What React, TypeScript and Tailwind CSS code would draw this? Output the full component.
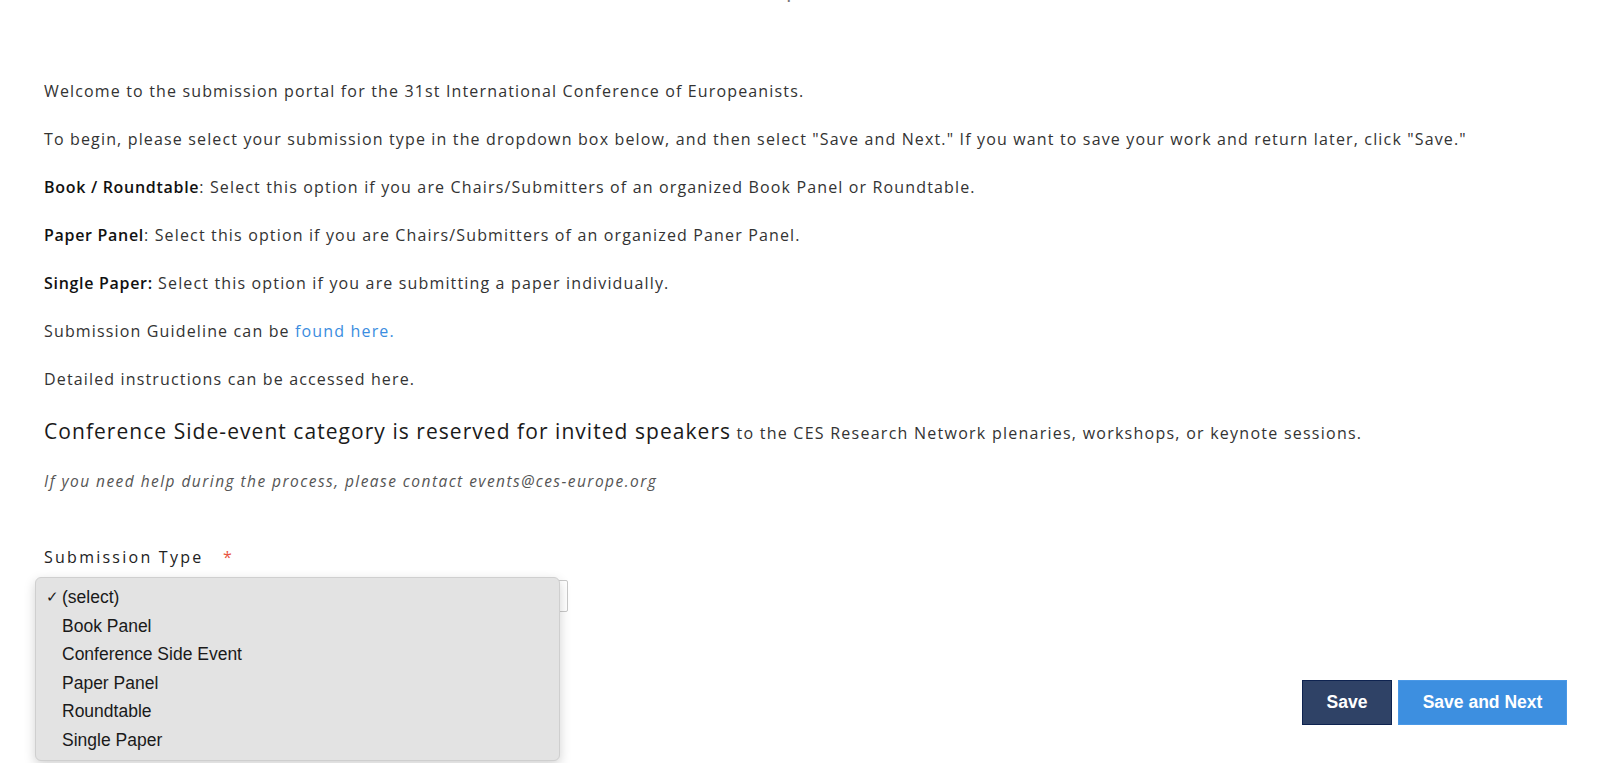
import React from "react";

const options = [
  "(select)",
  "Book Panel",
  "Conference Side Event",
  "Paper Panel",
  "Roundtable",
  "Single Paper",
];

const SubmissionSelect = () => {
  return (
    <div className="relative w-[524px]">
      <div className="h-[32px] w-full rounded-[2px] border border-[#c9c9c9] bg-white flex items-center justify-end pr-[6px]">
        <svg width="8" height="8" viewBox="0 0 8 8" className="text-[#555]">
          <path d="M1 3 L4 6 L7 3" fill="none" stroke="currentColor" strokeWidth="1" />
        </svg>
      </div>
      {/* open native list */}
      <div className="absolute left-[-9px] top-[-3px] w-[525px] rounded-[6px] border border-[#cfcfcf] bg-[#e3e3e3] pt-[5px] pb-[6px] shadow-[0_4px_12px_rgba(0,0,0,0.18)] font-['Liberation_Sans',Arial,sans-serif] text-[17.5px] tracking-normal text-[#1a1a1a]">
        {options.map((opt, i) => (
          <div key={opt} className="h-[28.5px] flex items-center">
            <span className="w-[26px] pl-[10px] text-[15px]">{i === 0 ? "✓" : ""}</span>
            <span>{opt}</span>
          </div>
        ))}
      </div>
    </div>
  );
};

export default function App() {
  return (
    <div className="min-h-[763px] bg-white font-['Open_Sans',sans-serif] text-[16px] tracking-[1.15px] text-[#333]">
      <div className="h-[79px] overflow-hidden flex justify-center pl-[22px]">
        <h2 className="-mt-[23px] text-[22px] leading-[22px] text-[#777]">(Step 1 of 5)</h2>
      </div>
      <div className="pl-[44px] pr-[33px]">
        <div className="flex flex-col gap-[24px] leading-[24px]">
          <p>Welcome to the submission portal for the 31st International Conference of Europeanists.</p>
          <p>
            To begin, please select your submission type in the dropdown box below, and then select "Save and
            Next." If you want to save your work and return later, click "Save."
          </p>
          <p>
            <span className="font-semibold tracking-[0.7px] text-[#111]">Book / Roundtable</span>: Select this option if you are
            Chairs/Submitters of an organized Book Panel or Roundtable.
          </p>
          <p>
            <span className="font-semibold tracking-[0.7px] text-[#111]">Paper Panel</span>: Select this option if you are
            Chairs/Submitters of an organized Paner Panel.
          </p>
          <p>
            <span className="font-semibold tracking-[0.7px] text-[#111]">Single Paper:</span> Select this option if you are
            submitting a paper individually.
          </p>
          <p>
            Submission Guideline can be{" "}
            <a href="#" className="text-[#3b8de0]">
              found here.
            </a>
          </p>
          <p>Detailed instructions can be accessed here.</p>
        </div>
        <p className="mt-[25px] leading-[30px] text-[#1a1a1a]">
          <span className="text-[21px] tracking-[1.05px]">Conference Side-event category is reserved for invited speakers</span>{" "}
          <span className="text-[16px] tracking-[1.25px] text-[#333]">
            to the CES Research Network plenaries, workshops, or keynote sessions.
          </span>
        </p>
        <p className="mt-[21px] leading-[24px] italic text-[15.5px] tracking-[1.45px] text-[#555]">
          If you need help during the process, please contact events@ces-europe.org
        </p>
        <div className="mt-[52px] flex flex-col gap-[11px]">
          <label className="leading-[24px] text-[16px] font-medium tracking-[2.25px] text-[#222]">
            Submission Type <span className="ml-[13px] text-[#e8553f]">*</span>
          </label>
          <SubmissionSelect />
        </div>
        <div className="mt-[68px] flex justify-end gap-[6px] font-['Liberation_Sans',Arial,sans-serif] text-[17.5px] tracking-normal font-bold text-white">
          <button className="h-[45px] w-[90px] border border-[#0e2350] bg-[#2f4266]">Save</button>
          <button className="h-[45px] w-[169px] border border-[#4a98e6] bg-[#3d8fe0]">Save and Next</button>
        </div>
      </div>
    </div>
  );
}
